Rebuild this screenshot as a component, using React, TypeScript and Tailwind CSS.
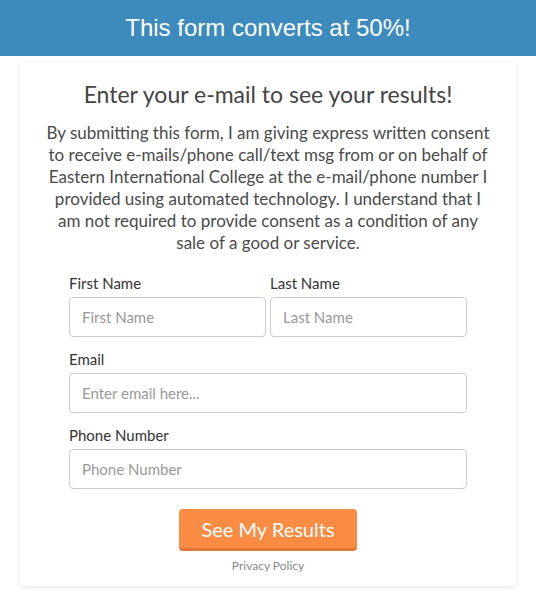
export default function App() {
  return (
    <div className="min-h-[600px] w-[536px] bg-white" style={{ fontFamily: 'Lato, "Noto Sans", sans-serif' }}>
      <div
        className="flex h-[56px] items-center justify-center bg-[#3d8bbd] text-[24px] text-white"
        style={{ fontFamily: '"Liberation Sans", Arial, sans-serif' }}
      >
        This form converts at 50%!
      </div>
      <div className="mx-[20px] mt-[6px] rounded-[4px] bg-white px-[22px] pb-[11px] pt-[14px] shadow-[0_1px_5px_rgba(0,0,0,0.1)]">
        <h1 className="text-center text-[23px] leading-[36px] text-[#444]">Enter your e-mail to see your results!</h1>
        <p className="mt-[10px] text-center text-[17px] leading-[22px] text-[#4a4a4a]">
          By submitting this form, I am giving express written consent to receive e-mails/phone call/text msg from or on behalf of Eastern International College at the e-mail/phone number I provided using automated technology. I understand that I am not required to provide consent as a condition of any sale of a good or service.
        </p>
        <form className="mx-auto mt-[17px] w-[398px]" onSubmit={e => e.preventDefault()}>
          <div className="flex gap-[4px]">
            <div className="flex-1">
              <label className="block text-[15px] leading-[24px] text-[#333]">First Name</label>
              <input
                placeholder="First Name"
                className="mt-[2px] h-[40px] w-full rounded-[4px] border border-[#ccc] px-[12px] text-[15px] text-[#333] placeholder:text-[#999] outline-none"
              />
            </div>
            <div className="flex-1">
              <label className="block text-[15px] leading-[24px] text-[#333]">Last Name</label>
              <input
                placeholder="Last Name"
                className="mt-[2px] h-[40px] w-full rounded-[4px] border border-[#ccc] px-[12px] text-[15px] text-[#333] placeholder:text-[#999] outline-none"
              />
            </div>
          </div>
          <div className="mt-[10px]">
            <label className="block text-[15px] leading-[24px] text-[#333]">Email</label>
            <input
              placeholder="Enter email here..."
              className="mt-[2px] h-[40px] w-full rounded-[4px] border border-[#ccc] px-[12px] text-[15px] text-[#333] placeholder:text-[#999] outline-none"
            />
          </div>
          <div className="mt-[10px]">
            <label className="block text-[15px] leading-[24px] text-[#333]">Phone Number</label>
            <input
              placeholder="Phone Number"
              className="mt-[2px] h-[40px] w-full rounded-[4px] border border-[#ccc] px-[12px] text-[15px] text-[#333] placeholder:text-[#999] outline-none"
            />
          </div>
          <div className="mt-[20px] flex justify-center">
            <button
              type="submit"
              className="h-[42px] w-[178px] rounded-[4px] border-b-[3px] border-[#e2763a] bg-[#f98b43] text-[20px] text-white"
            >
              See My Results
            </button>
          </div>
          <div className="mt-[6px] text-center text-[12px] leading-[18px] text-[#888]">Privacy Policy</div>
        </form>
      </div>
    </div>
  )
}
